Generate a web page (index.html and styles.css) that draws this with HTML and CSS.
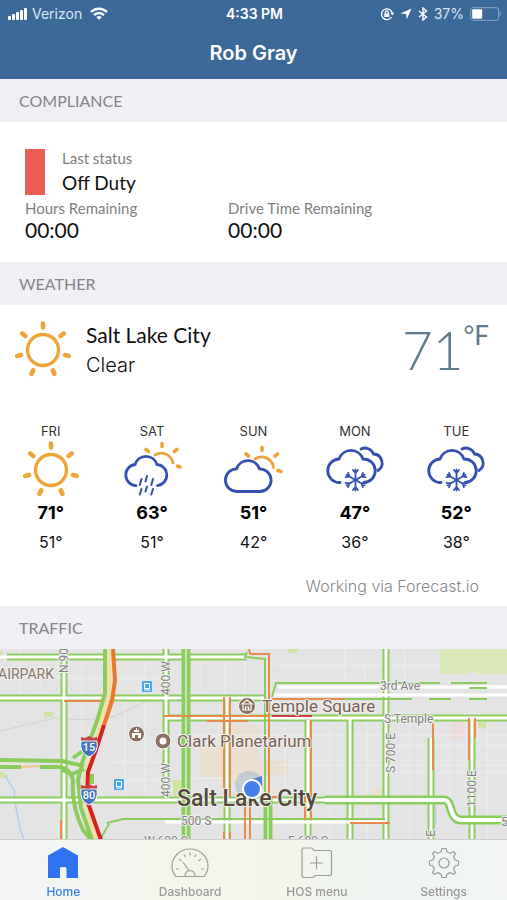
FILE: index.html
```html
<!DOCTYPE html>
<html lang="en">
<head>
<meta charset="utf-8">
<meta name="viewport" content="width=device-width, initial-scale=1">
<title>Rob Gray</title>
<link rel="stylesheet" href="styles.css">
</head>
<body>

<header class="top">
  <div class="status">
    <div class="status-left">
      <svg width="20" height="12" viewBox="0 0 20 12" fill="#fff"><rect x="0" y="8" width="3" height="4" rx="1"/><rect x="4" y="6" width="3" height="6" rx="1"/><rect x="8" y="4" width="3" height="8" rx="1"/><rect x="12" y="2" width="3" height="10" rx="1"/><rect x="16" y="0" width="3" height="12" rx="1"/></svg>
      <span>Verizon</span>
      <svg class="wifi" width="18" height="13" viewBox="0 0 18 13" fill="none" stroke="#fff" stroke-width="2.3"><path d="M1 5A11.5 11.5 0 0 1 17 5"/><path d="M4 8.2A7.2 7.2 0 0 1 14 8.2"/><path d="M9 12.8L6.3 10.2A4 4 0 0 1 11.7 10.2Z" fill="#fff" stroke="none"/></svg>
    </div>
    <strong class="clock">4:33 PM</strong>
    <div class="status-right">
      <svg width="14" height="14" viewBox="0 0 14 14" fill="none" stroke="#fff" stroke-width="1.3"><path d="M11.6 10A5.4 5.4 0 1 1 12.2 6"/><path d="M10.2 5.8h4l-2 2.6z" fill="#fff" stroke="none"/><rect x="4.3" y="6.4" width="5" height="3.6" fill="#fff" stroke="none"/><path d="M5.4 6.5V5.3a1.4 1.4 0 0 1 2.8 0v1.2"/></svg>
      <svg width="12" height="12" viewBox="0 0 12 12" fill="#fff"><path d="M11.5.5L6.7 11.5L6.2 5.9L.5 5.4Z"/></svg>
      <svg width="10" height="14" viewBox="0 0 10 14" fill="none" stroke="#fff" stroke-width="1.4"><path d="M1 4L8.5 10L5 13V1L8.5 4L1 10"/></svg>
      <span>37%</span>
      <svg width="31" height="14" viewBox="0 0 31 14"><rect x=".7" y=".7" width="28" height="12.6" rx="2.5" fill="none" stroke="#8ba8c6"/><rect x="2.2" y="2.2" width="10" height="9.6" rx="1" fill="#fff"/><path d="M29.7 4.5q2 2.5 0 5z" fill="#8ba8c6"/></svg>
    </div>
  </div>
  <h1>Rob Gray</h1>
</header>

<main>
  <h2>COMPLIANCE</h2>
  <section class="compliance">
    <div class="duty">
      <span class="flag"></span>
      <div>
        <p class="label">Last status</p>
        <p class="value">Off Duty</p>
      </div>
    </div>
    <div class="hours">
      <div>
        <p class="label">Hours Remaining</p>
        <p class="time">00:00</p>
      </div>
      <div>
        <p class="label">Drive Time Remaining</p>
        <p class="time">00:00</p>
      </div>
    </div>
  </section>

  <h2>WEATHER</h2>
  <section class="weather">
    <svg class="defs" width="0" height="0">
      <defs>
        <g id="sun" fill="none" stroke="#eda438" stroke-linecap="round">
          <circle r="15.5" stroke-width="3.4"/>
          <g stroke-width="4.6">
            <path id="ray" d="M0 -22.5V-26.5"/>
            <use href="#ray" transform="rotate(51.4)"/>
            <use href="#ray" transform="rotate(102.8)"/>
            <use href="#ray" transform="rotate(154.3)"/>
            <use href="#ray" transform="rotate(205.7)"/>
            <use href="#ray" transform="rotate(257.2)"/>
            <use href="#ray" transform="rotate(308.6)"/>
          </g>
        </g>
        <g id="snow" fill="none" stroke="#354fb0" stroke-linecap="round">
          <g stroke-width="2.8">
            <path d="M15 42.5A11.7 11.7 0 0 1 14 19A12.7 12.7 0 0 1 38 19A11.7 11.7 0 0 1 39 42.5"/>
            <path d="M36 9A9 9 0 0 1 48.5 14A9 9 0 0 1 53 30.5"/>
          </g>
          <g stroke-width="1.8" transform="translate(30.5 40)">
            <path id="arm" d="M0 0V-10.5M-2.5 -10L0 -7L2.5 -10"/>
            <use href="#arm" transform="rotate(60)"/>
            <use href="#arm" transform="rotate(120)"/>
            <use href="#arm" transform="rotate(180)"/>
            <use href="#arm" transform="rotate(240)"/>
            <use href="#arm" transform="rotate(300)"/>
          </g>
        </g>
      </defs>
    </svg>

    <div class="now">
      <svg width="60" height="60" viewBox="-30 -30 60 60"><use href="#sun"/></svg>
      <div class="place">
        <p class="city">Salt Lake City</p>
        <p class="sky">Clear</p>
      </div>
      <p class="temp">71<sup>°F</sup></p>
    </div>

    <ul class="days">
      <li>
        <span class="day">FRI</span>
        <svg width="60" height="60" viewBox="-30 -30 60 60"><use href="#sun"/></svg>
        <b>71°</b>
        <span class="low">51°</span>
      </li>
      <li>
        <span class="day">SAT</span>
        <svg width="60" height="60" viewBox="0 0 60 60" fill="none" stroke-linecap="round">
          <g stroke="#eda438"><path stroke-width="2.8" d="M33 15A12 12 0 0 1 51 23"/><path stroke-width="3.6" d="M40 3.5V6.5M52.5 11.5L55 9.5M24 9.5L26.5 11.5M55.5 26L58 27"/></g>
          <g stroke="#354fb0"><path stroke-width="2.8" d="M14 45.6A10.6 10.6 0 0 1 13 24.5A11.5 11.5 0 0 1 35 24.5A10.6 10.6 0 0 1 35.5 45.6"/><path stroke-width="2" d="M19.5 39L17.8 45M25 36L23.5 41.5M31 39L29.3 45M19.5 49L17.8 54.5M25 46.5L23.5 51.5M31 49L29.3 54.5"/></g>
        </svg>
        <b>63°</b>
        <span class="low">51°</span>
      </li>
      <li>
        <span class="day">SUN</span>
        <svg width="60" height="60" viewBox="0 0 60 60" fill="none" stroke-linecap="round">
          <g stroke="#eda438"><path stroke-width="2.8" d="M32 19A12 12 0 0 1 50.5 27.5"/><path stroke-width="3.6" d="M39 7.5V10.5M52 16L54.5 14M23 14L25.5 16M55 30.5L58 31.5"/></g>
          <path stroke="#354fb0" stroke-width="2.8" d="M14 51.5A11.3 11.3 0 0 1 13.5 28.8A12.2 12.2 0 0 1 36.5 28.8A11.3 11.3 0 0 1 37 51.5Z"/>
        </svg>
        <b>51°</b>
        <span class="low">42°</span>
      </li>
      <li>
        <span class="day">MON</span>
        <svg width="60" height="60" viewBox="0 0 60 60"><use href="#snow"/></svg>
        <b>47°</b>
        <span class="low">36°</span>
      </li>
      <li>
        <span class="day">TUE</span>
        <svg width="60" height="60" viewBox="0 0 60 60"><use href="#snow"/></svg>
        <b>52°</b>
        <span class="low">38°</span>
      </li>
    </ul>
    <p class="credit">Working via Forecast.io</p>
  </section>

  <h2>TRAFFIC</h2>
  <section class="traffic">
    <svg class="map" viewBox="0 649 507 191" preserveAspectRatio="xMidYMid slice">
      <rect y="649" width="507" height="191" fill="#e4e4e4"/>
      <path d="M440 649H507V674H478L472 671L468 674H440Z" fill="#dbe8b7"/>
      <path d="M44 712h9v5h-9zM0 771l8 4v3h-8zM173 780h12v16h-12zM287 649h12l-3 4h-6zM478 722h8v6h-8zM0 651h2v7h-2z" fill="#d0e5a4"/>
      <path d="M232 725h26v55h-26zM200 745h32v32h-32zM258 760h30v15h-30zM372 788h12v7h-12z" fill="#eadfd0"/>
      <path d="M451 722h14v17h-14z" fill="#eedcda"/>
      <!-- minor streets -->
      <path class="street" d="M20 649V695M40 660V695M82 649V760M125 703V795M145 649V797M200 649V695M225 660V695M245 660V695M330 723V840M367 723V840M405 649V683M410 723V840M450 740V800M487 723V840M345 649V683M365 660V683M285 723V795M0 678H160M110 762H160M110 780H160M190 735H507M190 778H260M275 765H507M390 745H507M390 772H507M275 665H440"/>
      <path d="M0 731Q30 724 55 718Q90 722 115 716L145 702" fill="none" stroke="#d4d4d4"/>
      <path d="M5 776L14 790L16 808L20 828L24 840M430 840L436 820L435 800" fill="none" stroke="#b5cdf0" stroke-width="1.5"/>

      <!-- two-way roads: coloured edges with a white middle -->
      <g class="edge">
        <path d="M7 657H247M0 698H265M165 718H507M0 800H440"/>
        <path d="M64 649V840M166 649V798M227 697V840M308 720V840M350 718V840M386 649V840M431 738V840M472 718V840"/>
      </g>
      <g class="middle">
        <path d="M0 657H247M0 698H265M165 718H507M0 800H440"/>
        <path d="M64 649V840M166 649V798M227 697V840M308 720V840M350 718V840M386 649V840M431 738V840M472 718V840M278 687H507M272 695H507M165 822H385"/>
      </g>
      <path class="big-edge" d="M186 649V840M268 797V840"/>
      <path class="big-middle" d="M186 649V840M268 797V840"/>
      <path class="big-edge" d="M325 800H444Q448 800 450 806Q453 820 461 820H507"/>
      <path d="M325 800H444Q448 800 450 806Q453 820 461 820H507" fill="none" stroke="#fff" stroke-width="4"/>
      <path class="green" d="M247 652L245 657L265 659V797M272 697L276 683H440M451 683H487M469 688H487M345 699H412M429 699H451M469 699H487M165 819H385M107 823L123 819H166"/>
      <path class="orange" d="M64 701H110M165 716H270M207 721H248M249 649L250 654H269V797H280M272 699H345M224 697V797M230 697V797M245 797V840M250 797V840M311 720V797M305 797V820M311 797V820M433 723V770M469 718V760M475 718V738M350 823H390M224 832V840M230 832V840M61 820V840M164 716H170"/>
      <path d="M272 716H312" stroke="#d43a43" stroke-width="2"/>

      <!-- interstate -->
      <path d="M109 649V692L98 735L86 772L85 800L96 840" fill="none" stroke="#f5deae" stroke-width="5"/>
      <path d="M105 649V693L98 718L83 760L78 780L81 808L92 840M0 760L62 761L84 766M40 767H58Q70 768 73 780Q71 805 83 830L91 840M0 767H21M73 758L84 750M62 770L72 774L84 769M92 774V784" fill="none" stroke="#8bcd5c" stroke-width="4"/>
      <path d="M21 767L40 766" stroke="#efc48f" stroke-width="2"/>
      <path d="M101 838L109 824" stroke="#8bcd5c" stroke-width="2"/>
      <path d="M113 649L115 680L112 701L104 725" fill="none" stroke="#e9792c" stroke-width="4"/>
      <path d="M104 725L96 750L88 772L87 800L101 840" fill="none" stroke="#d3231e" stroke-width="4"/>

      <g stroke="#fff" stroke-width="1">
        <g id="shield">
          <path d="M81 741Q79 753 89 757Q99 753 97 741Z" fill="#4673bd"/>
          <path d="M81 737L85 738L89 736L93 738L97 737V740.5H81Z" fill="#c9424a" stroke="none"/>
        </g>
        <use href="#shield" y="48"/>
      </g>
      <g class="shield-no"><text x="89" y="751">15</text><text x="89" y="799">80</text></g>

      <!-- transit stops -->
      <g id="stop"><rect x="142" y="681" width="10" height="11" rx="1" fill="#4aa6ec"/><path d="M144.5 683.5h5v5h-5zM144 690h6" fill="none" stroke="#fff"/></g>
      <use href="#stop" x="-28" y="98"/>

      <!-- places -->
      <g stroke="#fff">
        <circle cx="136.5" cy="734" r="8" fill="#8c7262"/>
        <circle cx="163" cy="741" r="8" fill="#8c7262"/>
        <circle cx="247" cy="706" r="8.5" fill="#8c7262"/>
      </g>
      <circle cx="163" cy="741" r="3.5" fill="#fff"/>
      <path d="M132 733h9v5h-3v-3h-3v3h-3zM134 730h5v2h-5zM136 728h1v2h-1z" fill="#fff"/>
      <path d="M242 704L247 700L252 704ZM243 705v5h8v-5M245.5 710v-3h3v3" fill="none" stroke="#fff" stroke-width="1.2"/>

      <circle cx="249" cy="785" r="14" fill="#9eb8cf" opacity=".5"/>
      <text class="town" x="177" y="806">Salt Lake City</text>
      <path d="M262 776V786L252 779Z" fill="#4a7fe0"/>
      <circle cx="252" cy="789" r="9" fill="#477fea" stroke="#fff" stroke-width="2"/>

      <g class="poi">
        <text x="262" y="712">Temple Square</text>
        <text x="177" y="747">Clark Planetarium</text>
        <text class="area" x="54" y="679" text-anchor="end">FAIRPARK</text>
      </g>
      <g class="road-name">
        <text x="380" y="690">3rd Ave</text>
        <text x="384" y="723">S Temple</text>
        <text x="181" y="825">500 S</text>
        <text x="501" y="826">500 S</text>
        <text x="144" y="845">W 600 S</text>
        <text x="288" y="845">E 600 S</text>
        <text transform="translate(68 673) rotate(-90)">N 900 W</text>
        <text transform="translate(170 695) rotate(-90)">400 W</text>
        <text transform="translate(170 797) rotate(-90)">400 W</text>
        <text transform="translate(395 773) rotate(-90)">S 700 E</text>
        <text transform="translate(476 807) rotate(-90)">1100 E</text>
        <text transform="translate(435 860) rotate(-90)">900 E</text>
      </g>
    </svg>
  </section>
</main>

<nav class="tabs">
  <a href="#home" class="active">
    <svg width="36" height="34" viewBox="0 0 36 34"><path d="M3 9.5L18 1L33 9.5V32H21.5V22.5Q21.5 21 20 21H16.5Q15 21 15 22.5V32H3Z" fill="#2f73f0"/></svg>
    Home
  </a>
  <a href="#dashboard">
    <svg width="40" height="34" viewBox="0 0 40 34" fill="none" stroke="#9d9f9c" stroke-width="1.2"><path d="M6 30.5Q2 26 2 20A18 17 0 0 1 38 20Q38 26 34 30.5Z"/><path d="M15 30Q15 25 20 24.5Q25 25 25 30M13 16L19 24.5M6 23H9M31 23H34M9 13L11.5 15M31 13L28.5 15M14 8.5L15.5 11M26 8.5L24.5 11M20 6.5V9.5"/></svg>
    Dashboard
  </a>
  <a href="#hos">
    <svg width="36" height="34" viewBox="0 0 36 34" fill="none" stroke="#9d9f9c" stroke-width="1.2"><path d="M4.5 2H13L15 4.5H31Q32.5 4.5 32.5 6V28Q32.5 29.5 31 29.5H16L14 31.5H5Q3 31.5 3 29.5V3.5Q3 2 4.5 2Z"/><path d="M17.5 10.5V23.5M11 17H24"/></svg>
    HOS menu
  </a>
  <a href="#settings">
    <svg width="34" height="34" viewBox="-17 -17 34 34" fill="none" stroke="#9d9f9c" stroke-width="1.2" stroke-linejoin="round"><circle r="5"/><path d="M-2 -14.5H2L3 -11Q5 -10.5 6 -9.5L9.5 -11.5L11.5 -9.5L9.5 -6Q10.5 -5 11 -3L14.5 -2V2L11 3Q10.5 5 9.5 6L11.5 9.5L9.5 11.5L6 9.5Q5 10.5 3 11L2 14.5H-2L-3 11Q-5 10.5 -6 9.5L-9.5 11.5L-11.5 9.5L-9.5 6Q-10.5 5 -11 3L-14.5 2V-2L-11 -3Q-10.5 -5 -9.5 -6L-11.5 -9.5L-9.5 -11.5L-6 -9.5Q-5 -10.5 -3 -11Z"/></svg>
    Settings
  </a>
</nav>

</body>
</html>
```
FILE: styles.css
```css
* {
	box-sizing: border-box;
}
body {
	margin: 0;
	min-height: 100vh;
	display: flex;
	flex-direction: column;
	background: #fff;
	color: #111;
	font-family: Lato, sans-serif;
}
h1, h2, p, ul {
	margin: 0;
	padding: 0;
	font-weight: normal;
}
svg {
	display: block;
	flex: none;
}

/* header */
.top {
	background: #3b6998;
	color: #fff;
	font-family: Inter, sans-serif;
}
.status {
	display: grid;
	grid-template-columns: 1fr auto 1fr;
	align-items: center;
	height: 27px;
	padding: 0 6px 0 8px;
	font-size: 14px;
}
.status-left, .status-right {
	display: flex;
	align-items: center;
	gap: 4px;
}
.status-left {
	color: #d9e6f4;
}
.wifi {
	margin-left: 4px;
}
.status-right {
	justify-content: flex-end;
	gap: 6px;
	color: #d9e6f4;
}
.clock {
	font-weight: 600;
}
h1 {
	text-align: center;
	font-size: 20px;
	font-weight: 600;
	line-height: 52px;
}

main {
	flex: 1;
	display: flex;
	flex-direction: column;
}
h2 {
	background: #efeff4;
	color: #85858a;
	font-size: 16px;
	line-height: 43px;
	padding: 0 19px;
}

/* compliance */
.compliance {
	padding: 27px 25px 19px;
}
.duty {
	display: flex;
	gap: 17px;
}
.flag {
	width: 20px;
	height: 46px;
	background: #e95f58;
}
.label {
	color: #808080;
	font-size: 15px;
	line-height: 18px;
}
.value {
	font-size: 19px;
	line-height: 32px;
}
.hours {
	display: grid;
	grid-template-columns: 4fr 5fr;
}
.time {
	font-size: 21px;
	line-height: 26px;
}

/* weather */
.defs {
	position: absolute;
}
.weather {
	padding-top: 15px;
}
.now {
	display: flex;
	padding: 0 18px 0 13px;
}
.place {
	flex: 1;
	padding-left: 13px;
	line-height: 30px;
}
.city {
	font-size: 21px;
}
.sky {
	font-family: Inter, sans-serif;
	font-size: 20px;
	font-weight: 300;
}
.temp {
	font-size: 53px;
	font-weight: 300;
	line-height: 60px;
	color: #5f7a8a;
	display: flex;
}
.temp sup {
	font-size: 26px;
	font-weight: 400;
	line-height: 30px;
}
.days {
	list-style: none;
	display: grid;
	grid-template-columns: repeat(5, 1fr);
	padding-top: 42px;
	font-family: Inter, sans-serif;
}
.days li {
	display: flex;
	flex-direction: column;
	align-items: center;
}
.days svg {
	overflow: visible;
}
.day {
	font-size: 13px;
	line-height: 18px;
	color: #333;
}
.days b {
	font-size: 18px;
	line-height: 26px;
	color: #000;
}
.low {
	font-size: 16px;
	line-height: 32px;
}
.credit {
	padding: 14px 28px 6px 0;
	text-align: right;
	font-family: Inter, sans-serif;
	font-size: 16px;
	font-weight: 300;
	line-height: 28px;
	color: #87898c;
}

/* traffic map */
.traffic {
	flex: 1;
	display: flex;
	min-height: 190px;
}
.map {
	width: 100%;
	height: auto;
	font-family: Roboto, sans-serif;
}
.street {
	fill: none;
	stroke: #ededed;
}
.edge, .big-edge, .green {
	fill: none;
	stroke: #8bcd5c;
}
.edge {
	stroke-width: 7px;
}
.middle {
	fill: none;
	stroke: #fff;
	stroke-width: 3px;
}
.big-edge {
	stroke-width: 9px;
}
.big-middle {
	stroke: #fff;
	stroke-width: 1px;
}
.green {
	stroke-width: 2px;
}
.orange {
	fill: none;
	stroke: #e98a4a;
	stroke-width: 2px;
}
.map text {
	paint-order: stroke;
	stroke: #f0f0f0;
	stroke-width: 2px;
	stroke-linejoin: round;
}
.poi {
	fill: #7b6052;
	font-size: 17px;
}
.poi .area {
	fill: #8a7867;
	font-size: 14px;
}
.town {
	fill: #54493b;
	font-size: 23px;
	font-weight: 500;
}
.road-name {
	fill: #808080;
	font-size: 12px;
}
.shield-no {
	fill: #fff;
	font-size: 11px;
	font-weight: 500;
	text-anchor: middle;
}
.map .shield-no text {
	stroke: none;
}

/* tab bar */
.tabs {
	position: sticky;
	bottom: 0;
	display: grid;
	grid-template-columns: repeat(4, 1fr);
	height: 60px;
	padding-top: 6px;
	background: linear-gradient(90deg, #f3f5f4, #f3f5e8 50%, #eef4f1 75%, #f2f4f6);
	box-shadow: 0 -1px 0 #cfcfcf;
}
.tabs a {
	display: flex;
	flex-direction: column;
	align-items: center;
	color: #9a9a9a;
	font-family: Inter, sans-serif;
	font-size: 12px;
	font-weight: 500;
	line-height: 24px;
	text-decoration: none;
}
.tabs .active {
	color: #3b7df0;
}
```
